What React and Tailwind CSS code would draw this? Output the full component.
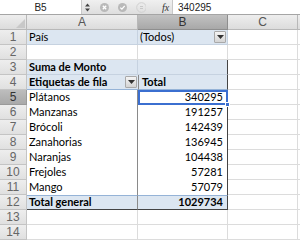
import React from "react";

const font = { fontFamily: "Lato, 'Liberation Sans', sans-serif" };

const Dropdown = () => (
  <span className="flex items-center justify-center w-[12px] h-[12px] bg-gradient-to-b from-[#f4f4f4] to-[#d4d4d4] border border-[#a9a9a9] rounded-[1px]">
    <svg width="7" height="4" viewBox="0 0 7 4">
      <path d="M0 0 H7 L3.5 4 Z" fill="#333" />
    </svg>
  </span>
);

const items = [
  ["Plátanos", "340295"],
  ["Manzanas", "191257"],
  ["Brócoli", "142439"],
  ["Zanahorias", "136945"],
  ["Naranjas", "104438"],
  ["Frejoles", "57281"],
  ["Mango", "57079"],
];

const RowHead = ({ n, active }) => (
  <div
    className={
      active
        ? "w-[27px] shrink-0 flex items-center justify-center border-r border-b border-[#9a9a9a] bg-gradient-to-b from-[#bdbdbd] to-[#a9a9a9] text-[#333] text-[12px]"
        : "w-[27px] shrink-0 flex items-center justify-center border-r border-b border-[#c4c4c4] bg-gradient-to-b from-[#eeeeee] to-[#e0e0e0] text-[#666] text-[12px]"
    }
    style={{ fontFamily: "'Liberation Sans', sans-serif" }}
  >
    {n}
  </div>
);

const Rest = () => (
  <>
    <div className="w-[70px] shrink-0 border-r border-b border-[#dcdcdc]" />
    <div className="flex-1 border-b border-[#dcdcdc]" />
  </>
);

export default function App() {
  return (
    <div className="w-[300px] h-[240px] overflow-hidden bg-white text-[11px] text-black" style={font}>
      {/* formula bar */}
      <div className="flex h-[15px] bg-gradient-to-b from-[#f0f0f0] to-[#dedede] border-b border-[#a5a5a5]">
        <div className="w-[82px] bg-white flex items-center justify-center text-[10px] text-[#222] border-r border-[#c8c8c8]" style={{ fontFamily: "'Liberation Sans', sans-serif" }}>
          B5
        </div>
        <div className="w-[10px] flex items-center justify-center">
          <svg width="5" height="9" viewBox="0 0 5 9">
            <path d="M0 3.5 L2.5 0.5 L5 3.5 Z M0 5.5 L2.5 8.5 L5 5.5 Z" fill="#444" />
          </svg>
        </div>
        <div className="w-[70px] flex items-center pl-[8px] gap-[9px]">
          <svg width="9" height="9" viewBox="0 0 9 9">
            <circle cx="4.5" cy="4.5" r="4.5" fill="#b9b9b9" />
            <path d="M2.8 2.8 L6.2 6.2 M6.2 2.8 L2.8 6.2" stroke="#fff" strokeWidth="1.3" />
          </svg>
          <svg width="9" height="9" viewBox="0 0 9 9">
            <circle cx="4.5" cy="4.5" r="4.5" fill="#b9b9b9" />
            <path d="M2.3 4.6 L3.9 6.1 L6.7 2.9" stroke="#fff" strokeWidth="1.3" fill="none" />
          </svg>
          <svg width="10" height="11" viewBox="0 0 10 11">
            <circle cx="5.5" cy="5.5" r="4.8" fill="none" stroke="#d0d0d0" strokeWidth="1" />
            <path d="M4 4.5 H7 M4 6.5 H7" stroke="#c4c4c4" strokeWidth="0.9" />
          </svg>
        </div>
        <div className="w-[10px] flex items-center text-[10px] italic text-[#333]" style={{ fontFamily: "'Liberation Serif', serif" }}>
          fx
        </div>
        <div className="flex-1 bg-white flex items-center pl-[5px] text-[10px] text-[#222] border-l border-[#c8c8c8]" style={{ fontFamily: "'Liberation Sans', sans-serif" }}>
          340295
        </div>
      </div>

      {/* column headers */}
      <div className="flex h-[15px] text-[12px]" style={{ fontFamily: "'Liberation Sans', sans-serif" }}>
        <div className="w-[27px] shrink-0 border-r border-b border-[#b8b8b8] bg-gradient-to-b from-[#eeeeee] to-[#dcdcdc] relative">
          <svg className="absolute right-[1px] bottom-[1px]" width="9" height="9" viewBox="0 0 9 9">
            <path d="M9 0 V9 H0 Z" fill="#c8c8c8" />
          </svg>
        </div>
        <div className="w-[111px] shrink-0 flex items-center justify-center border-r border-b border-[#b8b8b8] bg-gradient-to-b from-[#eeeeee] to-[#dcdcdc] text-[#555]">A</div>
        <div className="w-[90px] shrink-0 flex items-center justify-center border-r border-b border-[#8e8e8e] bg-gradient-to-b from-[#c2c2c2] to-[#a8a8a8] text-[#333]">B</div>
        <div className="w-[70px] shrink-0 flex items-center justify-center border-r border-b border-[#b8b8b8] bg-gradient-to-b from-[#eeeeee] to-[#dcdcdc] text-[#555]">C</div>
        <div className="flex-1 border-b border-[#b8b8b8] bg-gradient-to-b from-[#eeeeee] to-[#dcdcdc]" />
      </div>

      {/* row 1 */}
      <div className="flex h-[15px]">
        <RowHead n="1" />
        <div className="w-[111px] shrink-0 flex items-center pl-[2px] bg-[#dce6f1] border-r border-b border-[#c6d2e0]">País</div>
        <div className="w-[90px] shrink-0 flex items-center justify-between pl-[2px] pr-[1px] bg-[#dce6f1] border-r border-b border-[#c6d2e0]">
          (Todos)
          <Dropdown />
        </div>
        <Rest />
      </div>

      {/* row 2 */}
      <div className="flex h-[15px]">
        <RowHead n="2" />
        <div className="w-[111px] shrink-0 border-r border-b border-[#dcdcdc]" />
        <div className="w-[90px] shrink-0 border-r border-b border-[#dcdcdc]" />
        <Rest />
      </div>

      {/* row 3 */}
      <div className="flex h-[15px]">
        <RowHead n="3" />
        <div className="w-[111px] shrink-0 flex items-center pl-[2px] font-bold bg-[#dce6f1] border-r border-b border-[#c6d2e0]">Suma de Monto</div>
        <div className="w-[90px] shrink-0 bg-[#dce6f1] border-r border-r-[#444] border-b border-b-[#c6d2e0]" />
        <Rest />
      </div>

      {/* row 4 */}
      <div className="flex h-[15px]">
        <RowHead n="4" />
        <div className="w-[111px] shrink-0 flex items-center justify-between pl-[2px] pr-[1px] font-bold bg-[#dce6f1] border-b border-[#95b3d7]">
          Etiquetas de fila
          <Dropdown />
        </div>
        <div className="w-[90px] shrink-0 flex items-center pl-[3px] font-bold bg-[#dce6f1] border-l border-l-[#8a8a8a] border-r border-r-[#444] border-b border-b-[#95b3d7]">Total</div>
        <Rest />
      </div>

      {/* body */}
      {items.map(([name, val], i) => (
        <div key={name} className="flex h-[15px]">
          <RowHead n={String(i + 5)} active={i === 0} />
          <div className="w-[111px] shrink-0 flex items-center pl-[2px] border-r border-[#8a8a8a]">{name}</div>
          <div
            className={
              i === 0
                ? "w-[90px] shrink-0 flex items-center justify-end pr-[3px] border-2 border-[#3b6fd0] relative"
                : "w-[90px] shrink-0 flex items-center justify-end pr-[4px] border-r border-[#444]"
            }
          >
            {val}
            {i === 0 && (
              <span className="absolute right-[-4px] bottom-[-4px] w-[5px] h-[5px] bg-[#3b6fd0] border border-white" />
            )}
          </div>
          <Rest />
        </div>
      ))}

      {/* row 12 */}
      <div className="flex h-[15px]">
        <RowHead n="12" />
        <div className="w-[111px] shrink-0 flex items-center pl-[2px] font-bold bg-[#dce6f1] border-t border-t-[#95b3d7] border-r border-r-[#8a8a8a] border-b border-b-[#444]">Total general</div>
        <div className="w-[90px] shrink-0 flex items-center justify-end pr-[4px] font-bold bg-[#dce6f1] border-t border-t-[#95b3d7] border-r border-r-[#444] border-b border-b-[#444]">1029734</div>
        <Rest />
      </div>

      {["13", "14", ""].map((n) => (
        <div key={n || "x"} className="flex h-[15px]">
          <RowHead n={n} />
          <div className="w-[111px] shrink-0 border-r border-b border-[#dcdcdc]" />
          <div className="w-[90px] shrink-0 border-r border-b border-[#dcdcdc]" />
          <Rest />
        </div>
      ))}
    </div>
  );
}
